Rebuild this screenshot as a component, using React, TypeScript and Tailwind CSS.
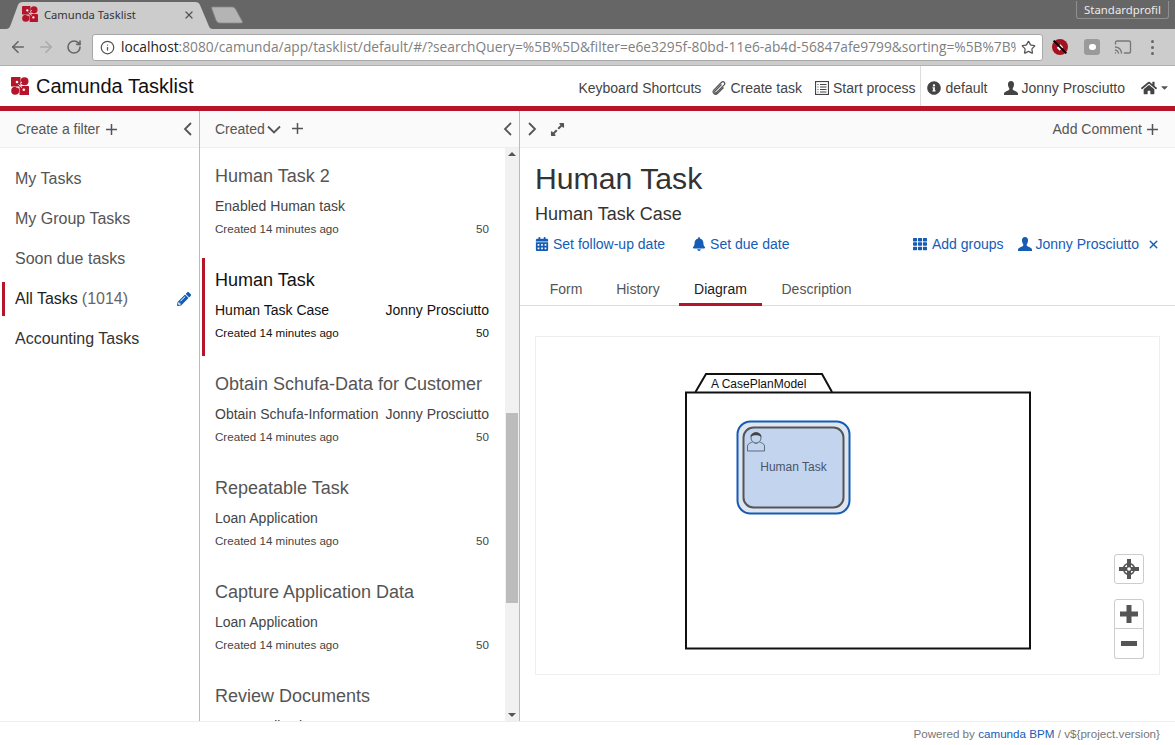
import React from "react";
import { ArrowLeft, ArrowRight, RotateCw, Star, Info, Cast, X } from "lucide-react";
import { FaHome, FaInfoCircle, FaCalendarAlt, FaBell, FaTh, FaPencilAlt, FaExpandAlt, FaCaretDown } from "react-icons/fa";

const sans = "font-['Liberation_Sans',Arial,sans-serif]";

function Logo({ size = 18 }: { size?: number }) {
  return (
    <svg width={size} height={size} viewBox="0 0 18 18">
      <rect x="0" y="0" width="9.500" height="9.500" rx="0.500" fill="#b5152b" />
      <circle cx="13.500" cy="4.300" r="4" fill="#b5152b" />
      <circle cx="4.200" cy="13.800" r="4" fill="#b5152b" />
      <rect x="8.500" y="9" width="9.500" height="9" rx="0.500" fill="#b5152b" />
      <path d="M7.500 7.500 L11 10.500 M9.500 6 L11 5 M6.500 10 L5.500 11" stroke="#fff" strokeWidth="1" />
      <circle cx="6" cy="5" r="1.300" fill="#fff" />
      <circle cx="12.800" cy="12.800" r="1.300" fill="#fff" />
    </svg>
  );
}

function PlusIcon({ className = "" }: { className?: string }) {
  return (
    <svg className={className} width="11" height="11" viewBox="0 0 11 11">
      <path d="M5.500 0v11M0 5.500h11" stroke="currentColor" strokeWidth="1.500" />
    </svg>
  );
}

function ChevL({ className = "" }: { className?: string }) {
  return (
    <svg className={className} width="9" height="14" viewBox="0 0 9 14" fill="none">
      <path d="M8 1 L2 7 L8 13" stroke="currentColor" strokeWidth="1.800" />
    </svg>
  );
}

function ChevR({ className = "" }: { className?: string }) {
  return (
    <svg className={className} width="9" height="14" viewBox="0 0 9 14" fill="none">
      <path d="M1 1 L7 7 L1 13" stroke="currentColor" strokeWidth="1.800" />
    </svg>
  );
}

function ChevD({ className = "" }: { className?: string }) {
  return (
    <svg className={className} width="14" height="9" viewBox="0 0 14 9" fill="none">
      <path d="M1 1.500 L7 7.500 L13 1.500" stroke="currentColor" strokeWidth="1.800" />
    </svg>
  );
}

function UserIcon({ className = "" }: { className?: string }) {
  return (
    <svg className={className} width="14" height="14" viewBox="0 0 14 14">
      <path d="M7 0 C9.300 0 10.200 1.800 10 3.800 C9.900 5.400 9.300 6.600 8.700 7.400 C8.400 8.400 9 9 10.500 9.700 C12.300 10.500 13.700 11 14 12.500 L14 14 L0 14 L0 12.500 C0.300 11 1.700 10.500 3.500 9.700 C5 9 5.600 8.400 5.300 7.400 C4.700 6.600 4.100 5.400 4 3.800 C3.800 1.800 4.700 0 7 0 Z" fill="currentColor" />
    </svg>
  );
}

function ClipIcon({ className = "" }: { className?: string }) {
  return (
    <svg className={className} width="14" height="14" viewBox="0 0 14 14" fill="none">
      <path d="M9.500 3.500 L3 10 C2 11.200 3.500 12.500 4.600 11.500 L12 4.200 C14 2 11.500 -0.500 9.300 1.500 L2 8.800 C-0.500 11.500 3 14.800 5.700 12.300 L11.500 6.500" stroke="currentColor" strokeWidth="1.200" />
    </svg>
  );
}

function ListAlt({ className = "" }: { className?: string }) {
  return (
    <svg className={className} width="14" height="14" viewBox="0 0 14 14" fill="none" stroke="#444">
      <rect x="0.500" y="0.500" width="13" height="13" strokeWidth="1.200" />
      <path d="M2.500 3.500h1M5 3.500h6.500M2.500 6h1M5 6h6.500M2.500 8.500h1M5 8.500h6.500M2.500 11h1M5 11h6.500" strokeWidth="1.200" />
    </svg>
  );
}

function BrowserChrome() {
  return (
    <div className="shrink-0">
      <div className="relative h-[29px] bg-[#666666]">
        <svg className="absolute left-0 top-0" width="250" height="29" viewBox="0 0 250 29">
          <path d="M5 29 C9 29 10 27 11 24 L18 5 C19 3 20 2 23 2 L195 2 C198 2 199 3 200 5 L208 24 C209 27 210 29 213 29 Z" fill="#cccccc" />
          <path d="M212 9 C211 7 212 7 214 7 L232 7 C234 7 235 8 236 10 L242 21 C243 23 242 23 240 23 L220 23 C218 23 217 22 216 20 Z" fill="#b4b4b4" stroke="#8a8a8a" strokeWidth="0.800" />
        </svg>
        <div className="absolute left-[22px] top-[6px]"><Logo size={16} /></div>
        <span className="absolute left-[44px] top-[5px] font-['Noto_Sans',sans-serif] text-[11.2px] leading-[20px] text-[#333333]">Camunda Tasklist</span>
        <X className="absolute left-[183px] top-[9px] text-[#555555]" size={12} strokeWidth={2.4} />
        <div className="absolute left-[1076px] top-[1px] flex h-[18px] w-[93px] items-center justify-center rounded-b-[3px] border border-t-0 border-[#8f8f8f] font-['Noto_Sans',sans-serif] text-[11.4px] text-[#ececec]">Standardprofil</div>
      </div>
      <div className="flex h-[37px] items-center border-b border-[#b0b0b0] bg-[#cccccc]">
        <ArrowLeft className="ml-[9px] text-[#666666]" size={18} strokeWidth={2.2} />
        <ArrowRight className="ml-[10px] text-[#aaaaaa]" size={18} strokeWidth={2.2} />
        <RotateCw className="ml-[11px] text-[#666666]" size={16} strokeWidth={2.4} />
        <div className="ml-[10px] flex h-[27px] w-[951px] items-center rounded-[3px] border border-[#a8a8a8] bg-white pl-[7px] pr-[6px]">
          <Info size={15} className="shrink-0 text-[#555555]" />
          <div className="ml-[6px] flex-1 overflow-hidden whitespace-nowrap font-['Open_Sans',sans-serif] text-[13.75px] text-[#808080]">
            <span className="text-[#222222]">localhost</span>:8080/camunda/app/tasklist/default/#/?searchQuery=%5B%5D&filter=e6e3295f-80bd-11e6-ab4d-56847afe9799&sorting=%5B%7B%22
          </div>
          <Star size={15} className="ml-[5px] shrink-0 text-[#555555]" strokeWidth={2} />
        </div>
        <div className="relative ml-[9px] flex h-4 w-4 items-center justify-center rounded-full bg-[#a5121f]">
          <div className="absolute h-[5px] w-[4px] rotate-45 bg-white" />
          <div className="absolute h-[2px] w-[18px] rotate-45 bg-black" />
        </div>
        <div className="ml-[16px] flex h-[16px] w-[16px] items-center justify-center rounded-[3px] bg-[#9a9a9a]">
          <div className="h-[6px] w-[7px] rounded-full bg-white" />
        </div>
        <Cast size={18} className="ml-[14px] text-[#777777]" strokeWidth={1.8} />
        <div className="ml-[19px] flex flex-col gap-[3px]">
          <div className="h-[3px] w-[3px] rounded-full bg-[#666666]" />
          <div className="h-[3px] w-[3px] rounded-full bg-[#666666]" />
          <div className="h-[3px] w-[3px] rounded-full bg-[#666666]" />
        </div>
      </div>
    </div>
  );
}

function PageHeader() {
  return (
    <div className="flex h-[40px] shrink-0 items-center bg-white text-[14px] text-[#444444]">
      <div className="ml-[11px]"><Logo /></div>
      <div className="ml-[7px] text-[20px] text-[#111111]">Camunda Tasklist</div>
      <div className="ml-auto flex h-full items-center">
        <span className="pt-[4px]">Keyboard Shortcuts</span>
        <ClipIcon className="ml-[11px] mt-[3px] text-[#555555]" />
        <span className="ml-[4px] pt-[4px]">Create task</span>
        <ListAlt className="ml-[13px] mt-[3px]" />
        <span className="ml-[4px] pt-[4px]">Start process</span>
        <div className="ml-[5px] flex h-full items-center border-l border-[#dddddd] pl-[6px]">
          <FaInfoCircle size={14} className="mt-[3px]" />
          <span className="ml-[4px] pt-[4px]">default</span>
          <UserIcon className="ml-[16px] mt-[3px]" />
          <span className="ml-[4px] pt-[4px]">Jonny Prosciutto</span>
          <FaHome className="ml-[16px] mt-[3px]" size={16} />
          <FaCaretDown className="ml-[2px] mr-[5px] mt-[3px] text-[#555555]" size={11} />
        </div>
      </div>
    </div>
  );
}

function Filters() {
  return (
    <div className="flex w-[200px] shrink-0 flex-col border-r border-[#bbbbbb]">
      <div className="flex h-[37px] shrink-0 items-center border-b border-[#eeeeee] bg-[#fafafa] pl-[16px] pr-[7px] text-[14px] text-[#555555]">
        <span>Create a filter</span>
        <PlusIcon className="ml-[6px]" />
        <ChevL className="ml-auto" />
      </div>
      <div className="flex flex-col pt-[11px] text-[16px]">
        <div className="flex h-[40px] items-center pl-[15px] text-[#555555]">My Tasks</div>
        <div className="flex h-[40px] items-center pl-[15px] text-[#555555]">My Group Tasks</div>
        <div className="flex h-[40px] items-center pl-[15px] text-[#555555]">Soon due tasks</div>
        <div className="relative flex h-[40px] items-center pl-[15px] text-[#222222]">
          <span className="absolute left-[2px] top-[3px] h-[34px] w-[3px] bg-[#b5152b]" />
          All Tasks
          <span className="ml-[4px] text-[#666666]">(1014)</span>
          <FaPencilAlt size={14} className="ml-auto mr-[8px] text-[#155cb5]" />
        </div>
        <div className="flex h-[40px] items-center pl-[15px] text-[#333333]">Accounting Tasks</div>
      </div>
    </div>
  );
}

type Task = { title: string; sub: string; who?: string; active?: boolean };
const tasks: Task[] = [
  { title: "Human Task 2", sub: "Enabled Human task" },
  { title: "Human Task", sub: "Human Task Case", who: "Jonny Prosciutto", active: true },
  { title: "Obtain Schufa-Data for Customer", sub: "Obtain Schufa-Information", who: "Jonny Prosciutto" },
  { title: "Repeatable Task", sub: "Loan Application" },
  { title: "Capture Application Data", sub: "Loan Application" },
  { title: "Review Documents", sub: "Loan Application" },
];

function TaskRow({ t }: { t: Task }) {
  const main = t.active ? "text-[#111111]" : "text-[#555555]";
  const sub = t.active ? "text-[#111111]" : "text-[#444444]";
  return (
    <div className="relative mb-[6px] h-[98px] shrink-0 pl-[15px] pr-[16px]">
      {t.active && <span className="absolute left-[2px] top-0 h-full w-[3px] bg-[#b5152b]" />}
      <div className={`pt-[12px] text-[18px] leading-[20px] ${main}`}>{t.title}</div>
      <div className={`mt-[10px] flex justify-between text-[14px] leading-[20px] ${sub}`}>
        <span>{t.sub}</span>
        {t.who && <span>{t.who}</span>}
      </div>
      <div className={`mt-[4px] flex justify-between text-[11.6px] leading-[18px] ${sub}`}>
        <span>Created 14 minutes ago</span>
        <span>50</span>
      </div>
    </div>
  );
}

function TaskList() {
  return (
    <div className="flex w-[320px] shrink-0 flex-col border-r border-[#bbbbbb]">
      <div className="flex h-[37px] shrink-0 items-center border-b border-[#eeeeee] bg-[#fafafa] pl-[15px] pr-[7px] text-[14px] text-[#555555]">
        <span>Created</span>
        <ChevD className="ml-[2px]" />
        <PlusIcon className="ml-[11px] -mt-[2px]" />
        <ChevL className="ml-auto" />
      </div>
      <div className="flex min-h-0 flex-1">
        <div className="flex min-w-0 flex-1 flex-col overflow-hidden pt-[6px]">
          {tasks.map((t) => <TaskRow key={t.title} t={t} />)}
        </div>
        <div className="flex w-[14px] shrink-0 flex-col items-center bg-[#f1f1f1]">
          <div className="mt-[4px] h-0 w-0 border-x-[4px] border-b-[4px] border-x-transparent border-b-[#555555]" />
          <div className="mt-[257px] h-[190px] w-[12px] bg-[#bcbcbc]" />
          <div className="mb-[4px] mt-auto h-0 w-0 border-x-[4px] border-t-[4px] border-x-transparent border-t-[#555555]" />
        </div>
      </div>
    </div>
  );
}

function Diagram() {
  return (
    <div className="relative mx-[15px] mt-[30px] h-[339px] border border-[#eeeeee]">
      <svg className="absolute left-0 top-0" width="623" height="337" viewBox="0 0 623 337">
        <g transform="translate(-536 -337)">
          <path d="M695.500 392 L706 374 L822 374 L832 392" fill="#fff" stroke="#111" strokeWidth="2" />
          <rect x="686" y="392.500" width="344" height="256" fill="#fff" stroke="#111" strokeWidth="2" />
          <text x="711" y="388" fontFamily="Liberation Sans, Arial, sans-serif" fontSize="12" fill="#111">A CasePlanModel</text>
          <rect x="737.500" y="421.500" width="112" height="92" rx="13" fill="#dfe6f2" stroke="#155cb5" strokeWidth="2" />
          <rect x="743.500" y="427.500" width="100" height="80" rx="10" fill="#c2d4ee" stroke="#555" strokeWidth="2" />
          <path d="M747.500 451 L747.500 446 C748 443 751 443 753 441.500 C755 444 757 444 759 441.500 C761 443 764 443 764.500 446 L764.500 451 Z" fill="none" stroke="#5c6b80" strokeWidth="1" />
          <circle cx="756" cy="438" r="5" fill="#c2d4ee" stroke="#5c6b80" strokeWidth="1" />
          <path d="M750.500 437 C750.500 430.500 761.500 430.500 761.500 437 C759 434.800 753 434.800 750.500 437 Z" fill="#444" />
          <text x="793.500" y="471" textAnchor="middle" fontFamily="Liberation Sans, Arial, sans-serif" fontSize="12" fill="#4a5568">Human Task</text>
        </g>
      </svg>
      <div className="absolute left-[578px] top-[217px] flex h-[30px] w-[30px] items-center justify-center rounded-[3px] border border-[#cccccc] bg-white">
        <svg width="22" height="22" viewBox="0 0 22 22">
          <path d="M11 1v20M1 11h20" stroke="#555" strokeWidth="4" />
          <circle cx="11" cy="11" r="5.500" fill="none" stroke="#555" strokeWidth="1.500" />
          <circle cx="11" cy="11" r="1.800" fill="#fff" />
        </svg>
      </div>
      <div className="absolute left-[578px] top-[262px] flex h-[30px] w-[30px] items-center justify-center rounded-t-[3px] border border-[#cccccc] bg-white">
        <svg width="18" height="18" viewBox="0 0 18 18"><path d="M9 0v18M0 9h18" stroke="#555" strokeWidth="5" /></svg>
      </div>
      <div className="absolute left-[578px] top-[292px] flex h-[30px] w-[30px] items-center justify-center rounded-b-[3px] border border-t-0 border-[#cccccc] bg-white">
        <svg width="16" height="6" viewBox="0 0 16 6"><rect width="16" height="5" fill="#555" /></svg>
      </div>
    </div>
  );
}

function Detail() {
  return (
    <div className="flex min-w-0 flex-1 flex-col">
      <div className="flex h-[37px] shrink-0 items-center border-b border-[#eeeeee] bg-[#fafafa] pl-[8px] pr-[17px] text-[14px] text-[#555555]">
        <ChevR />
        <FaExpandAlt size={15} className="ml-[13px]" />
        <span className="ml-auto">Add Comment</span>
        <PlusIcon className="ml-[5px]" />
      </div>
      <div className="px-[15px] pt-[13px]">
        <div className="text-[30.2px] leading-[36px] text-[#333333]">Human Task</div>
        <div className="mt-[7px] text-[18px] leading-[20px] text-[#333333]">Human Task Case</div>
        <div className="mt-[10px] flex h-[20px] items-center text-[14px] text-[#155cb5]">
          <FaCalendarAlt size={14} />
          <span className="ml-[4px]">Set follow-up date</span>
          <FaBell size={14} className="ml-[27px]" />
          <span className="ml-[4px]">Set due date</span>
          <FaTh size={14} className="ml-auto" />
          <span className="ml-[5px]">Add groups</span>
          <UserIcon className="ml-[14px]" />
          <span className="ml-[4px]">Jonny Prosciutto</span>
          <X size={13} strokeWidth={2.6} className="ml-[8px]" />
        </div>
      </div>
      <div className="mt-[17px] flex h-[35px] shrink-0 items-stretch border-b border-[#dddddd] pl-[15px] text-[14px] text-[#555555]">
        <div className="flex w-[62px] items-center justify-center pt-[2px]">Form</div>
        <div className="flex w-[82px] items-center justify-center pt-[2px]">History</div>
        <div className="relative flex w-[83px] items-center justify-center pt-[2px] text-[#222222]">
          Diagram
          <span className="absolute -bottom-[1px] left-0 h-[3px] w-full bg-[#b5152b]" />
        </div>
        <div className="flex w-[109px] items-center justify-center pt-[2px]">Description</div>
      </div>
      <Diagram />
    </div>
  );
}

export default function App() {
  return (
    <div className={`flex h-[745px] w-[1175px] flex-col overflow-hidden bg-white ${sans}`}>
      <BrowserChrome />
      <PageHeader />
      <div className="h-[5px] shrink-0 bg-[#b5152b]" />
      <div className="flex min-h-0 flex-1">
        <Filters />
        <TaskList />
        <Detail />
      </div>
      <div className="flex h-[24px] shrink-0 items-center justify-end border-t border-[#eeeeee] bg-white pr-[15px] pt-[1px] text-[11.65px] text-[#777777]">
        <span>Powered by&nbsp;</span>
        <span className="text-[#155cb5]">camunda BPM</span>
        <span>&nbsp;/ v$&#123;project.version&#125;</span>
      </div>
    </div>
  );
}
